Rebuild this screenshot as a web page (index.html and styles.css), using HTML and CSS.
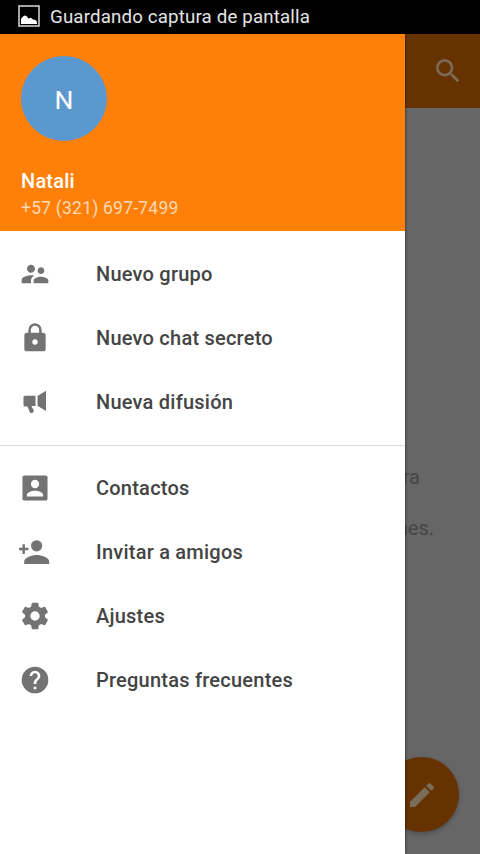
FILE: index.html
```html
<!DOCTYPE html>
<html lang="es">
<head>
    <meta charset="UTF-8">
    <meta name="viewport" content="width=device-width, initial-scale=1.0">
    <title>Chats</title>
    <link rel="stylesheet" href="styles.css">
</head>
<body>
    <div class="statusbar">
        <svg class="shot" viewBox="0 0 22 22">
            <rect x="1" y="1" width="20" height="20" fill="none" stroke="#ccc" stroke-width="1.6"/>
            <path fill="#fff" d="M3 19v-5l1.500-2 2-1.500 2 .5 2 2.500 2.500-.8 2 1.800 2.500.5 1.500 2v2z"/>
        </svg>
        <span class="status-text">Guardando captura de pantalla</span>
    </div>
    <div class="screen">
        <div class="toolbar">
            <svg class="icon" viewBox="0 0 24 24"><path d="M15.5 14h-.79l-.28-.27A6.47 6.47 0 0 0 16 9.5 6.5 6.5 0 1 0 9.5 16c1.61 0 3.09-.59 4.23-1.57l.27.28v.79l5 4.99L20.49 19l-4.99-5zm-6 0C7.01 14 5 11.99 5 9.5S7.01 5 9.5 5 14 7.01 14 9.5 11.99 14 9.5 14z"/></svg>
        </div>
        <div class="empty">
            <p>ra</p>
            <p>nes.</p>
        </div>
        <div class="fab">
            <svg viewBox="0 0 24 24"><path d="M3 17.25V21h3.75L17.81 9.94l-3.75-3.75L3 17.25zM20.71 7.04a1 1 0 0 0 0-1.41l-2.34-2.34a1 1 0 0 0-1.41 0l-1.83 1.83 3.75 3.75 1.83-1.83z"/></svg>
        </div>

        <div class="drawer">
            <div class="profile">
                <div class="avatar">N</div>
                <div class="name">Natali</div>
                <div class="phone">+57 (321) 697-7499</div>
            </div>
            <ul class="menu">
                <li>
                    <svg class="icon" viewBox="0 0 24 24"><path d="M16.5 12c1.38 0 2.49-1.12 2.49-2.5S17.88 7 16.5 7 14 8.12 14 9.5s1.12 2.5 2.5 2.5zM9 11c1.66 0 2.99-1.34 2.99-3S10.66 5 9 5 6 6.34 6 8s1.34 3 3 3zm7.5 3c-1.83 0-5.5.92-5.5 2.75V19h11v-2.25c0-1.83-3.67-2.75-5.5-2.75zM9 13c-2.33 0-7 1.17-7 3.5V19h7v-2.25c0-.85.33-2.34 2.37-3.47C10.5 13.1 9.66 13 9 13z"/></svg>
                    <span>Nuevo grupo</span>
                </li>
                <li>
                    <svg class="icon" viewBox="0 0 24 24"><path d="M18 8h-1V6A5 5 0 0 0 7 6v2H6a2 2 0 0 0-2 2v10a2 2 0 0 0 2 2h12a2 2 0 0 0 2-2V10a2 2 0 0 0-2-2zm-6 9a2 2 0 1 1 0-4 2 2 0 0 1 0 4zm3.1-9H8.9V6a3.1 3.1 0 0 1 6.2 0v2z"/></svg>
                    <span>Nuevo chat secreto</span>
                </li>
                <li>
                    <svg class="icon" viewBox="0 0 32 32"><path d="M6 9.700h10.500v10.300H12.500l2.500 5-1.200 1.700-2.600.3-2.700-6.500H6q-1.500 0-1.500-1.500v-7.800q0-1.500 1.500-1.500zM18.500 10l8.500-5.300v20.300l-8.500-5.300z"/></svg>
                    <span>Nueva difusión</span>
                </li>
            </ul>
            <ul class="menu">
                <li>
                    <svg class="icon" viewBox="0 0 24 24"><path d="M2.600 4v16a1.400 1.400 0 0 0 1.400 1.400h16a1.400 1.400 0 0 0 1.400-1.400V4A1.400 1.400 0 0 0 20 2.600H4A1.400 1.400 0 0 0 2.600 4zm12.500 5a3.100 3.100 0 1 1-6.200 0 3.100 3.100 0 0 1 6.200 0zM5.900 17.200c0-2.100 4.100-3.200 6.100-3.200s6.100 1.100 6.100 3.200v1.100H5.900v-1.100z"/></svg>
                    <span>Contactos</span>
                </li>
                <li>
                    <svg class="icon" viewBox="0 0 32 32"><circle cx="17.6" cy="9.8" r="5.6"/><path d="M5.200 28v-2.500c0-4 8-6.500 12.600-6.500s12.400 2.500 12.400 6.500V28zM3.500 8.300h2.400v3.500h3.600v2.400H5.900V18H3.500v-3.800H0v-2.400h3.500z"/></svg>
                    <span>Invitar a amigos</span>
                </li>
                <li>
                    <svg class="icon" viewBox="0 0 24 24"><path d="M19.43 12.98c.04-.32.07-.64.07-.98s-.03-.66-.07-.98l2.11-1.65c.19-.15.24-.42.12-.64l-2-3.46c-.12-.22-.39-.3-.61-.22l-2.49 1c-.52-.4-1.08-.73-1.69-.98l-.38-2.65C14.46 2.18 14.25 2 14 2h-4c-.25 0-.46.18-.49.42l-.38 2.65c-.61.25-1.17.59-1.69.98l-2.49-1c-.23-.09-.49 0-.61.22l-2 3.46c-.13.22-.07.49.12.64l2.11 1.65c-.04.32-.07.65-.07.98s.03.66.07.98l-2.11 1.65c-.19.15-.24.42-.12.64l2 3.46c.12.22.39.3.61.22l2.49-1c.52.4 1.08.73 1.69.98l.38 2.65c.03.24.24.42.49.42h4c.25 0 .46-.18.49-.42l.38-2.65c.61-.25 1.17-.59 1.69-.98l2.49 1c.23.09.49 0 .61-.22l2-3.46c.12-.22.07-.49-.12-.64l-2.11-1.65zM12 15.5a3.5 3.5 0 1 1 0-7 3.5 3.5 0 0 1 0 7z"/></svg>
                    <span>Ajustes</span>
                </li>
                <li>
                    <svg class="icon" viewBox="0 0 24 24"><path d="M12 2a10 10 0 1 0 0 20 10 10 0 0 0 0-20zm1 17h-2v-2h2v2zm2.07-7.75l-.9.92C13.45 12.9 13 13.5 13 15h-2v-.5c0-1.1.45-2.1 1.17-2.83l1.24-1.26c.37-.36.59-.86.59-1.41a2 2 0 0 0-4 0H8a4 4 0 0 1 8 0c0 .88-.36 1.68-.93 2.25z"/></svg>
                    <span>Preguntas frecuentes</span>
                </li>
            </ul>
        </div>
    </div>
</body>
</html>
```

FILE: styles.css
```css
body {
    margin: 0;
    height: 854px;
    display: flex;
    flex-direction: column;
    overflow: hidden;
    font-family: Roboto, sans-serif;
    background-color: #000;
}
.statusbar {
    display: flex;
    align-items: center;
    height: 34px;
    box-sizing: border-box;
    padding: 0 0 2px 18px;
    gap: 10px;
    color: #e4e4e4;
    font-size: 18.7px;
    letter-spacing: 0.16px;
}
.status-text {
    padding-top: 2px;
}
.shot {
    width: 22px;
    height: 22px;
}
.screen {
    position: relative;
    flex: 1;
    background-color: #666;
}
.toolbar {
    display: flex;
    justify-content: flex-end;
    align-items: center;
    height: 74px;
    padding-right: 16px;
    background-color: #663300;
}
.toolbar .icon {
    fill: #7d6a58;
}
.icon {
    display: block;
    flex: none;
    width: 32px;
    height: 32px;
    fill: #737373;
}
.empty {
    padding: 344px 46px 0 0;
    font-size: 20px;
    line-height: 51px;
    text-align: right;
    color: #454545;
}
.empty p {
    margin: 0;
}
.empty p:first-child {
    padding-right: 14px;
}
.fab {
    position: absolute;
    right: 21px;
    bottom: 22px;
    display: flex;
    justify-content: center;
    align-items: center;
    width: 75px;
    height: 75px;
    border-radius: 50%;
    background-color: #663300;
    box-shadow: 0 2px 4px rgba(0, 0, 0, 0.25);
}
.fab svg {
    width: 32px;
    height: 32px;
    fill: #7a6d5c;
}
.drawer {
    position: absolute;
    top: 0;
    left: 0;
    width: 405px;
    height: 100%;
    background-color: #fff;
    box-shadow: 0 0 3px rgba(0, 0, 0, 0.6);
}
.profile {
    height: 197px;
    box-sizing: border-box;
    padding: 22px 21px 0;
    background-color: #ff8008;
    color: #fff;
}
.avatar {
    width: 86px;
    height: 85px;
    border-radius: 50%;
    background-color: #5b98d0;
    font-size: 26.5px;
    line-height: 88px;
    text-align: center;
}
.name {
    margin-top: 27px;
    font-size: 20px;
    font-weight: 500;
    line-height: 26px;
    letter-spacing: 0.2px;
}
.phone {
    font-size: 17.5px;
    line-height: 28px;
    letter-spacing: 0.22px;
    color: #ffd9b5;
}
.menu {
    margin: 0;
    padding: 11px 0;
    list-style: none;
}
.menu + .menu {
    border-top: 1px solid #dcdcdc;
    padding-top: 10.4px;
}
.menu li {
    display: flex;
    align-items: center;
    gap: 45.5px;
    height: 64px;
    padding-left: 18.5px;
    font-size: 20px;
    font-weight: 500;
    letter-spacing: 0.23px;
    color: #444;
}
```
